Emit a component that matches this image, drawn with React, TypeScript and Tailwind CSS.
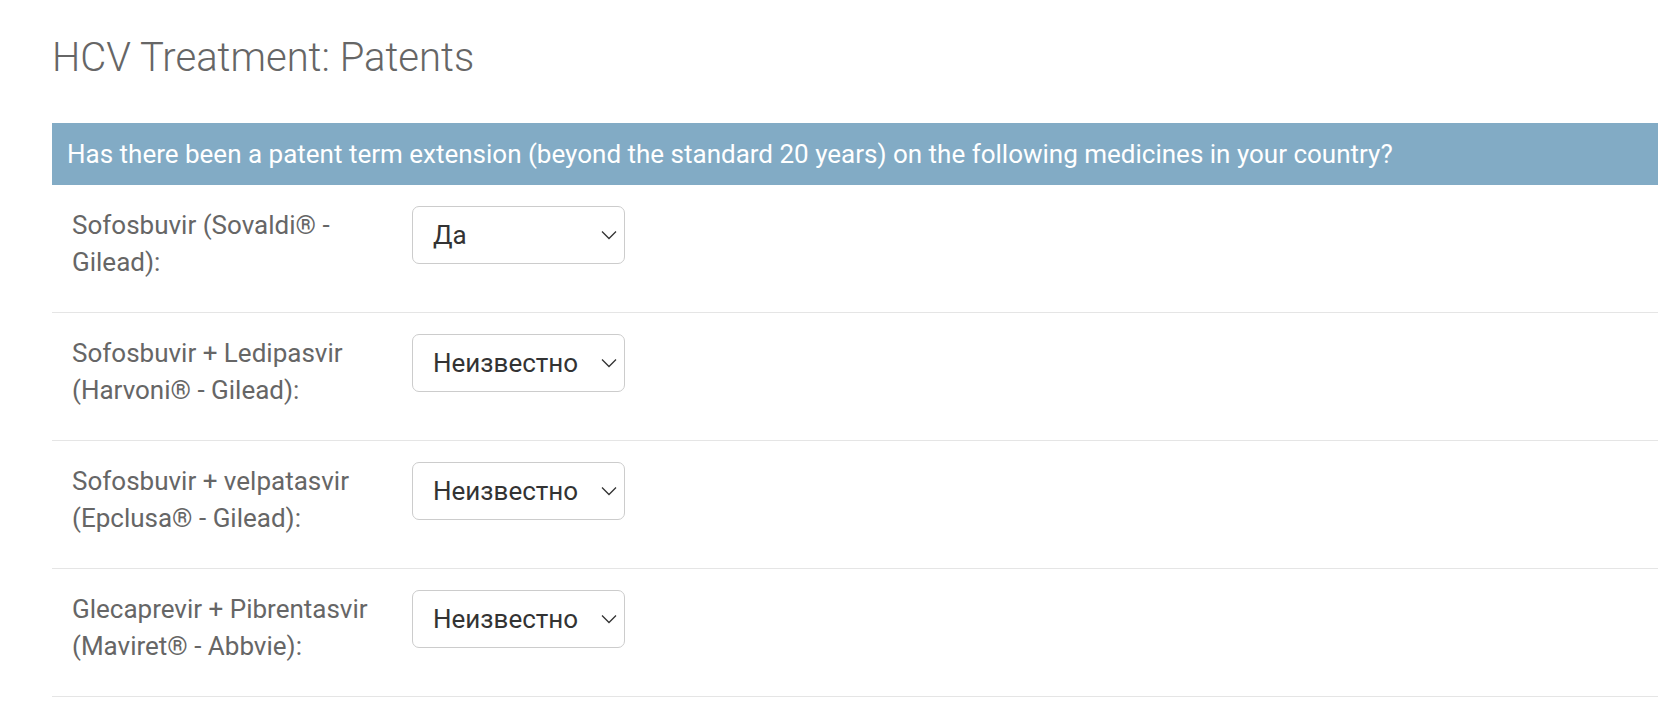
const rows = [
  { label: "Sofosbuvir (Sovaldi® - Gilead):", value: "Да" },
  { label: "Sofosbuvir + Ledipasvir (Harvoni® - Gilead):", value: "Неизвестно" },
  { label: "Sofosbuvir + velpatasvir (Epclusa® - Gilead):", value: "Неизвестно" },
  { label: "Glecaprevir + Pibrentasvir (Maviret® - Abbvie):", value: "Неизвестно" },
  { label: "Sofosbuvir + Daclatasvir:", value: "Неизвестно" },
];

function SelectBox({ value }: { value: string }) {
  return (
    <div className="flex h-[58px] w-[213px] shrink-0 items-center justify-between rounded-[7px] border border-[#cccccc] bg-white pl-[20px] pr-[7px] text-[26px] text-[#333333]">
      <span>{value}</span>
      <svg width="16" height="10" viewBox="0 0 16 10" fill="none" stroke="#333" strokeWidth="1.3">
        <path d="M1 1.5 L8 8.5 L15 1.5" />
      </svg>
    </div>
  );
}

export default function App() {
  return (
    <div className="min-h-screen overflow-hidden bg-white font-['Roboto',sans-serif]">
      <div className="pl-[52px]">
        <h1 className="pt-[35px] text-[40px] font-light leading-[46px] text-[#666666]">
          HCV Treatment: Patents
        </h1>
        <div className="mt-[42px] flex h-[62px] w-[1700px] items-center whitespace-nowrap bg-[#82abc5] pl-[15px] text-[26px] text-white">
          Has there been a patent term extension (beyond the standard 20 years) on the following medicines in your country?
        </div>
        {rows.map((row) => (
          <div
            key={row.label}
            className="flex w-[1700px] items-start gap-[23px] border-b border-[#e5e5e5] pb-[31px] pl-[20px] pt-[21px]"
          >
            <div className="mt-[1px] w-[317px] text-[26px] leading-[37px] text-[#666666]">{row.label}</div>
            <SelectBox value={row.value} />
          </div>
        ))}
      </div>
    </div>
  );
}
